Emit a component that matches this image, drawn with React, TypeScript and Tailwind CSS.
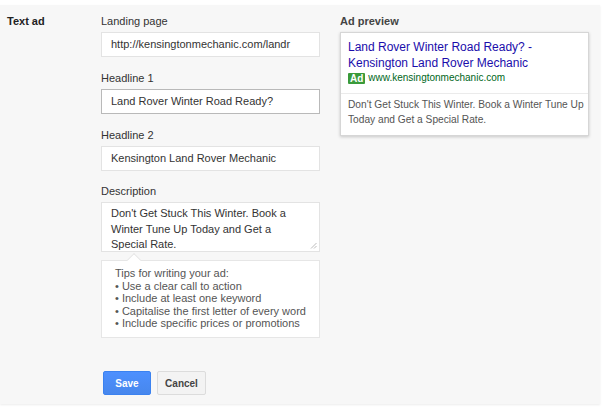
import React from 'react';

const font = { fontFamily: '"Liberation Sans", Arial, Helvetica, sans-serif' };

const tips = [
  'Use a clear call to action',
  'Include at least one keyword',
  'Capitalise the first letter of every word',
  'Include specific prices or promotions',
];

function Field({ label, value, focused, first }: { label: string; value: string; focused?: boolean; first?: boolean }) {
  return (
    <div className={first ? '' : 'mt-[13px]'}>
      <div className="h-4 text-[11px] leading-4 text-[#333]">{label}</div>
      <div
        className={`mt-[3px] flex h-[25px] items-center overflow-hidden whitespace-nowrap border bg-white px-[9px] text-[11px] text-[#333] ${
          focused ? 'border-[#b9b9b9]' : 'border-[#e3e3e3]'
        }`}
      >
        {value}
      </div>
    </div>
  );
}

export default function App() {
  return (
    <div className="h-[410px] w-[605px] overflow-hidden bg-white pt-[5px]" style={font}>
      <div className="flex h-[399px] w-[600px] bg-[#f7f7f7] shadow-[0_1px_2px_rgba(0,0,0,0.08)]">
        <div className="w-[101px] pl-[7px] pt-[8px] text-[11px] font-bold leading-4 text-[#222]">Text ad</div>

        <div className="w-[219px] pt-[8px]">
          <Field first label="Landing page" value="http://kensingtonmechanic.com/landr" />
          <Field label="Headline 1" value="Land Rover Winter Road Ready?" focused />
          <Field label="Headline 2" value="Kensington Land Rover Mechanic" />

          <div className="mt-[12px]">
            <div className="h-4 text-[11px] leading-4 text-[#333]">Description</div>
            <div className="relative mt-[3px] h-[50px] border border-[#e3e3e3] bg-white pl-[9px] pr-[30px] pt-[3px] text-[11px] leading-[15.5px] text-[#333]">
              Don't Get Stuck This Winter. Book a Winter Tune Up Today and Get a Special Rate.
              <svg className="absolute bottom-[2px] right-[2px]" width="7" height="7" viewBox="0 0 7 7">
                <path d="M6.5 1 L1 6.5 M6.5 4 L4 6.5" stroke="#aaa" strokeWidth="0.8" />
              </svg>
            </div>
          </div>

          <div className="relative mt-[8px] h-[78px] border border-[#e6e6e6] bg-white px-[13px] pt-[6px] text-[11px] leading-[12.5px] text-[#555]">
            <div className="absolute -top-[6px] left-[27px] h-[10px] w-[10px] rotate-45 border-l border-t border-[#e6e6e6] bg-white" />
            <div className="relative">Tips for writing your ad:</div>
            {tips.map((t) => (
              <div key={t} className="relative">• {t}</div>
            ))}
          </div>

          <div className="mt-[33px] flex gap-[6px] pl-[2px]">
            <button className="h-[24px] w-[48px] rounded-[2px] border border-[#3b82f0] bg-gradient-to-b from-[#4d90fe] to-[#4787ed] text-[10px] font-bold text-white">
              Save
            </button>
            <button className="h-[24px] w-[49px] rounded-[2px] border border-[#dcdcdc] bg-[#f3f3f3] text-[10px] font-bold text-[#444]">
              Cancel
            </button>
          </div>
        </div>

        <div className="ml-[20px] w-[249px] pt-[8px]">
          <div className="h-4 text-[11px] font-bold leading-4 text-[#444]">Ad preview</div>
          <div className="mt-[3px] border border-[#d6d6d6] bg-white shadow-[0_1px_3px_rgba(0,0,0,0.2)]">
            <div className="h-[60px] px-[7px] pt-[6px]">
              <div className="text-[12px] leading-[16px] text-[#1a0dab]">
                Land Rover Winter Road Ready? -<br />Kensington Land Rover Mechanic
              </div>
              <div className="flex items-center gap-[3px] text-[10px] leading-[14px] text-[#006621]">
                <span className="rounded-[1px] bg-[#3a9a3a] px-[2px] text-[10px] font-bold leading-[11px] text-white">Ad</span>
                www.kensingtonmechanic.com
              </div>
            </div>
            <div className="h-[42px] border-t border-[#ebebeb] pl-[7px] pr-[4px] pt-[3px] text-[10.2px] leading-[15px] text-[#545454]">
              Don't Get Stuck This Winter. Book a Winter Tune Up Today and Get a Special Rate.
            </div>
          </div>
        </div>
      </div>
    </div>
  );
}
